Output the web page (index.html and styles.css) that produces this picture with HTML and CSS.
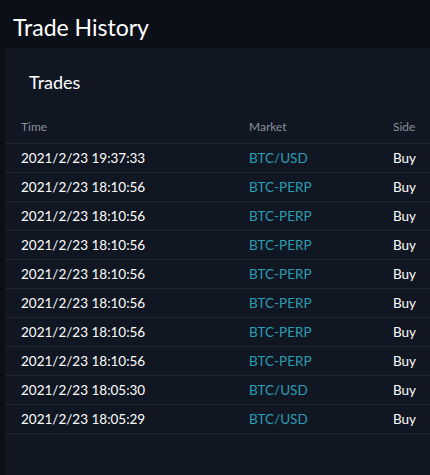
FILE: index.html
```html
<!DOCTYPE html>
<html>
<head>
<meta charset="utf-8">
<link rel="stylesheet" href="styles.css">
</head>
<body>
<h1 class="page-title">Trade History</h1>
<section class="card">
  <h2 class="card-title">Trades</h2>
  <div class="table">
    <div class="row head"><span>Time</span><span>Market</span><span>Side</span></div>
    <div class="row"><span>2021/2/23 19:37:33</span><span class="mkt">BTC/USD</span><span>Buy</span></div>
    <div class="row"><span>2021/2/23 18:10:56</span><span class="mkt">BTC-PERP</span><span>Buy</span></div>
    <div class="row"><span>2021/2/23 18:10:56</span><span class="mkt">BTC-PERP</span><span>Buy</span></div>
    <div class="row"><span>2021/2/23 18:10:56</span><span class="mkt">BTC-PERP</span><span>Buy</span></div>
    <div class="row"><span>2021/2/23 18:10:56</span><span class="mkt">BTC-PERP</span><span>Buy</span></div>
    <div class="row"><span>2021/2/23 18:10:56</span><span class="mkt">BTC-PERP</span><span>Buy</span></div>
    <div class="row"><span>2021/2/23 18:10:56</span><span class="mkt">BTC-PERP</span><span>Buy</span></div>
    <div class="row"><span>2021/2/23 18:10:56</span><span class="mkt">BTC-PERP</span><span>Buy</span></div>
    <div class="row"><span>2021/2/23 18:05:30</span><span class="mkt">BTC/USD</span><span>Buy</span></div>
    <div class="row"><span>2021/2/23 18:05:29</span><span class="mkt">BTC/USD</span><span>Buy</span></div>
  </div>
</section>
</body>
</html>
```
FILE: styles.css
```css
html, body {
  margin: 0;
  padding: 0;
  background: #0b0f17;
  overflow: hidden;
  font-family: Lato, "Open Sans", sans-serif;
  color: #f4f6f8;
}
.page-title {
  margin: 0;
  padding: 12px 0 0 13px;
  height: 36px;
  font-size: 23px;
  font-weight: 400;
  line-height: 30px;
  color: #ffffff;
}
.card {
  margin-left: 5px;
  height: 440px;
  background: #111722;
  border-radius: 4px 0 0 0;
}
.card-title {
  margin: 0;
  padding: 22px 0 0 24px;
  font-size: 18px;
  font-weight: 400;
  line-height: 24px;
  color: #ffffff;
}
.table {
  margin-top: 16px;
}
.row {
  display: grid;
  grid-template-columns: 228px 144px 1fr;
  padding-left: 16px;
  height: 28px;
  align-items: center;
  border-bottom: 1px solid #1e2531;
  font-size: 13.5px;
  color: #ffffff;
}
.row.head {
  height: 33px;
  font-size: 12px;
  color: #8a909a;
}
.mkt {
  color: #2b9db3;
}
```
